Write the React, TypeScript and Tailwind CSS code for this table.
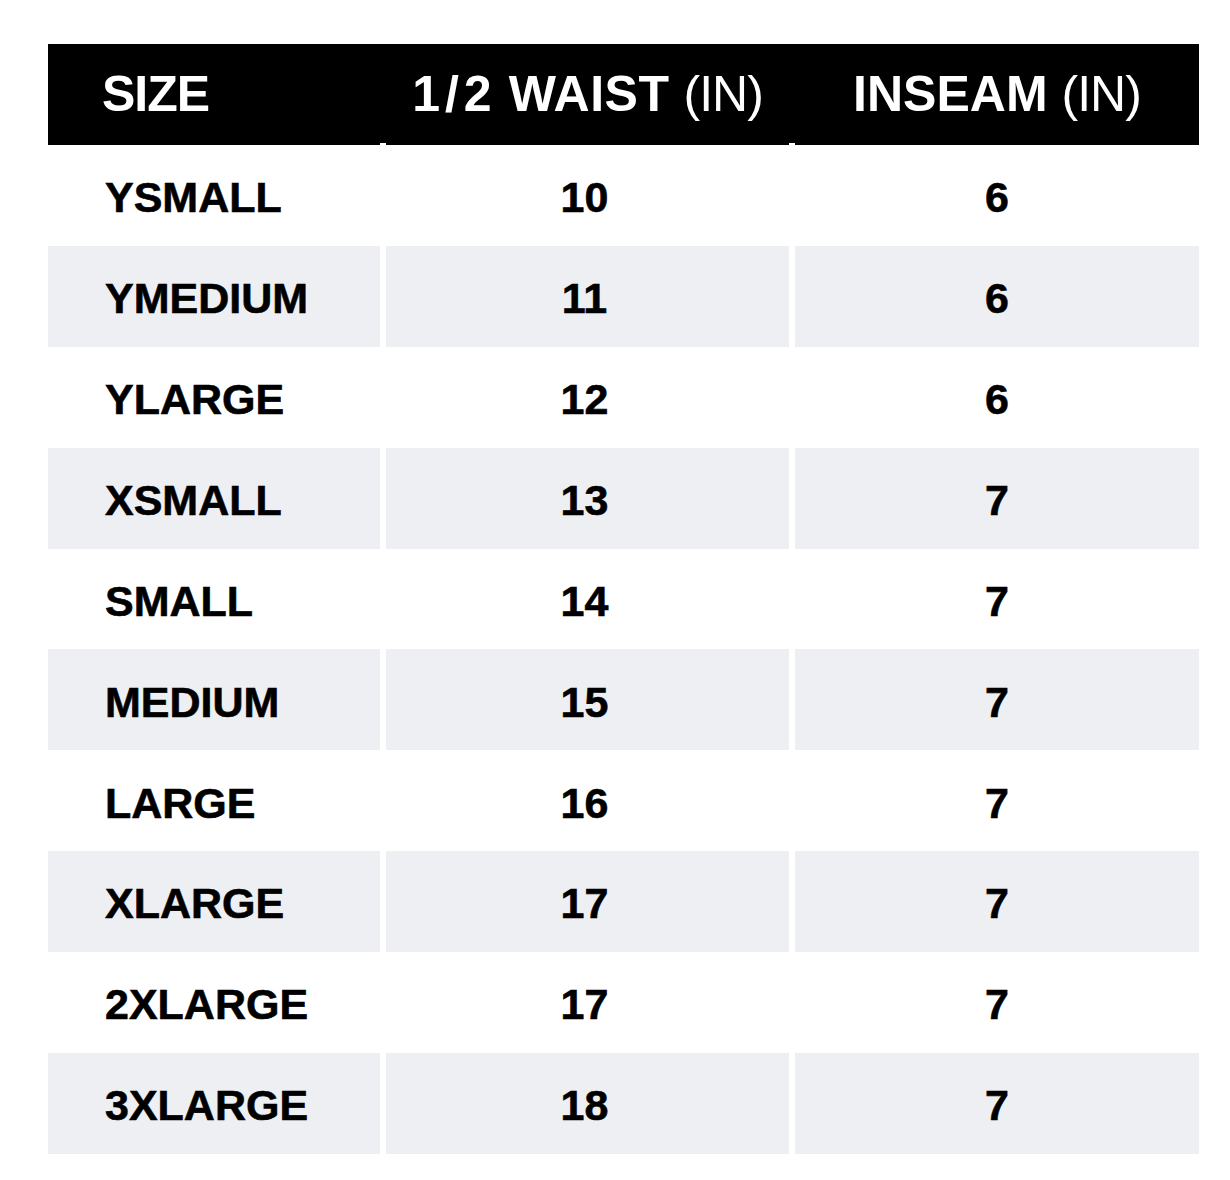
const rows: [string, string, string][] = [
  ["YSMALL", "10", "6"],
  ["YMEDIUM", "11", "6"],
  ["YLARGE", "12", "6"],
  ["XSMALL", "13", "7"],
  ["SMALL", "14", "7"],
  ["MEDIUM", "15", "7"],
  ["LARGE", "16", "7"],
  ["XLARGE", "17", "7"],
  ["2XLARGE", "17", "7"],
  ["3XLARGE", "18", "7"],
];

const cols = "grid grid-cols-[332px_403px_404px] gap-x-[6px]";
const cell = "flex items-center pt-[4px] text-[43px] font-bold text-black [-webkit-text-stroke:0.6px_black]";

export default function App() {
  return (
    <div className="min-h-[1180px] w-[1230px] bg-white pt-[44px] pl-[48px] font-['Liberation_Sans',Arial,sans-serif]">
      <div className="w-[1151px]">
        {/* header: black band, thin white notches at the bottom of the column gaps */}
        <div className="h-[99px] bg-black">
          <div className={cols}>
            <div className="flex h-[101px] items-center bg-black pl-[54px] text-[50px] font-bold tracking-[-1px] text-white">
              SIZE
            </div>
            <div className="flex h-[101px] items-center justify-center bg-black text-[50px] font-bold text-white">
              <span className="tracking-[5px]">1/2</span>
              <span className="ml-[12px] tracking-[0.5px]">WAIST</span>
              <span className="ml-[14px] font-normal tracking-[-1px]">(IN)</span>
            </div>
            <div className="flex h-[101px] items-center justify-center bg-black text-[50px] font-bold text-white">
              <span>INSEAM</span>
              <span className="ml-[14px] font-normal tracking-[-1px]">(IN)</span>
            </div>
          </div>
        </div>
        <div className="mt-[2px]">
          {rows.map(([size, waist, inseam], i) => {
            const bg = i % 2 === 1 ? "bg-[#eeeff3]" : "bg-white";
            return (
              <div key={size} className={`${cols} h-[100.9px]`}>
                <div className={`${bg} ${cell} pl-[57px]`}>{size}</div>
                <div className={`${bg} ${cell} justify-center pr-[6px]`}>{waist}</div>
                <div className={`${bg} ${cell} justify-center`}>{inseam}</div>
              </div>
            );
          })}
        </div>
      </div>
    </div>
  );
}
